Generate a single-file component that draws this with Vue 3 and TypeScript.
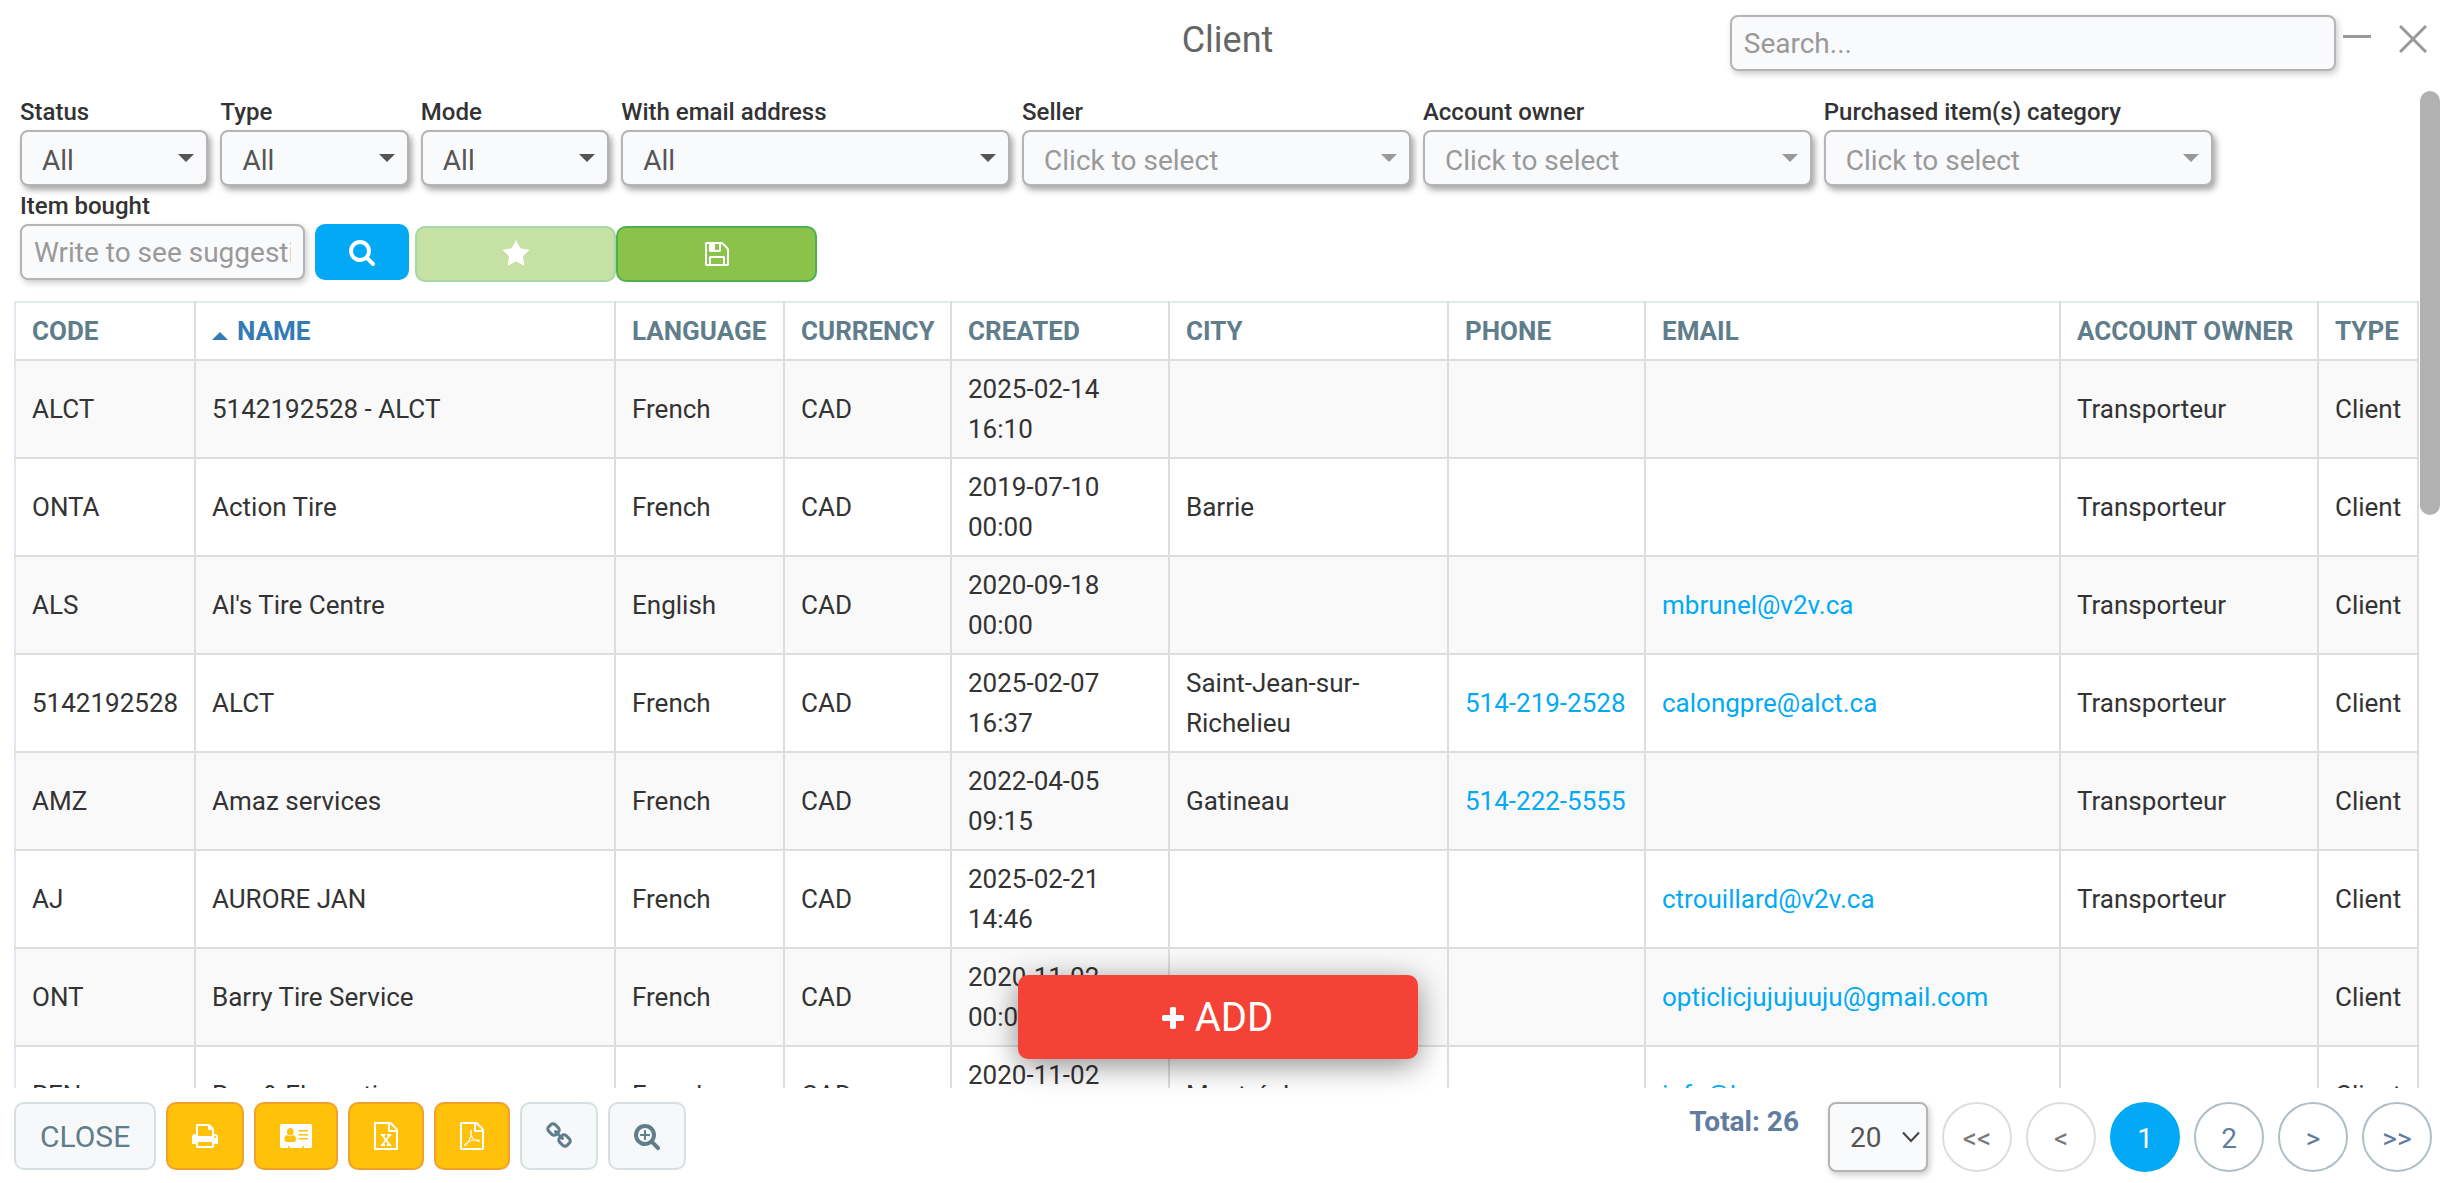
<script setup lang="ts">
import { ref } from 'vue'

interface Filter {
  id: string
  label: string
  value: string
  span: 1 | 2
  muted?: boolean
}

interface Client {
  code: string
  name: string
  language: string
  currency: string
  created: string
  city?: string
  phone?: string
  email?: string
  owner?: string
  type: string
}

interface Action {
  label: string
  icon: string
  viewBox: string
  width: number
  tone: 'amber' | 'light'
}

const filters: Filter[] = [
  { id: 'status', label: 'Status', value: 'All', span: 1 },
  { id: 'type', label: 'Type', value: 'All', span: 1 },
  { id: 'mode', label: 'Mode', value: 'All', span: 1 },
  { id: 'with-email', label: 'With email address', value: 'All', span: 2 },
  { id: 'seller', label: 'Seller', value: 'Click to select', span: 2, muted: true },
  { id: 'owner', label: 'Account owner', value: 'Click to select', span: 2, muted: true },
  { id: 'category', label: 'Purchased item(s) category', value: 'Click to select', span: 2, muted: true },
]

const columns = ['Code', 'Name', 'Language', 'Currency', 'Created', 'City', 'Phone', 'Email', 'Account owner', 'Type']
const sortedBy = 'Name'

const clients: Client[] = [
  { code: 'ALCT', name: '5142192528 - ALCT', language: 'French', currency: 'CAD', created: '2025-02-14 16:10', owner: 'Transporteur', type: 'Client' },
  { code: 'ONTA', name: 'Action Tire', language: 'French', currency: 'CAD', created: '2019-07-10 00:00', city: 'Barrie', owner: 'Transporteur', type: 'Client' },
  { code: 'ALS', name: "Al's Tire Centre", language: 'English', currency: 'CAD', created: '2020-09-18 00:00', email: 'mbrunel@v2v.ca', owner: 'Transporteur', type: 'Client' },
  { code: '5142192528', name: 'ALCT', language: 'French', currency: 'CAD', created: '2025-02-07 16:37', city: 'Saint-Jean-sur-Richelieu', phone: '514-219-2528', email: 'calongpre@alct.ca', owner: 'Transporteur', type: 'Client' },
  { code: 'AMZ', name: 'Amaz services', language: 'French', currency: 'CAD', created: '2022-04-05 09:15', city: 'Gatineau', phone: '514-222-5555', owner: 'Transporteur', type: 'Client' },
  { code: 'AJ', name: 'AURORE JAN', language: 'French', currency: 'CAD', created: '2025-02-21 14:46', email: 'ctrouillard@v2v.ca', owner: 'Transporteur', type: 'Client' },
  { code: 'ONT', name: 'Barry Tire Service', language: 'French', currency: 'CAD', created: '2020-11-02 00:00', email: 'opticlicjujujuuju@gmail.com', type: 'Client' },
  { code: 'REN', name: 'Ren & Eleganti', language: 'French', currency: 'CAD', created: '2020-11-02 00:00', city: 'Montréal', email: 'info@b', type: 'Client' },
]

const sheet = 'M1596 380q28 28 48 76t20 88v1152q0 40-28 68t-68 28h-1344q-40 0-68-28t-28-68v-1600q0-40 28-68t68-28h896q40 0 88 20t76 48zm-444-244v376h376q-10-29-22-41l-313-313q-12-12-41-22zm384 1528v-1024h-416q-40 0-68-28t-28-68v-416h-768v1536h1280z'
const lens = 'M1216 832q0-185-131.5-316.5t-316.5-131.5-316.5 131.5-131.5 316.5 131.5 316.5 316.5 131.5 316.5-131.5 131.5-316.5zm512 832q0 52-38 90t-90 38q-54 0-90-38l-343-342q-179 124-399 124-143 0-273.5-55.5t-225-150-150-225-55.5-273.5 55.5-273.5 150-225 225-150 273.5-55.5 273.5 55.5 225 150 150 225 55.5 273.5q0 220-124 399l343 343q37 37 37 90z'

const icons = {
  search: lens,
  star: 'M1728 647q0 22-26 48l-363 354 86 500q1 7 1 20 0 21-10.5 35.5t-30.5 14.5q-19 0-40-12l-449-236-449 236q-22 12-40 12-21 0-31.5-14.5t-10.5-35.5q0-6 2-20l86-500-364-354q-25-27-25-48 0-37 56-46l502-73 225-455q19-41 49-41t49 41l225 455 502 73q56 9 56 46z',
  save: 'M512 1536h768v-384h-768v384zm896 0h128v-896q0-14-10-38.5t-20-34.5l-281-281q-10-10-34-20t-39-10v416q0 40-28 68t-68 28h-576q-40 0-68-28t-28-68v-416h-128v1280h128v-416q0-40 28-68t68-28h832q40 0 68 28t28 68v416zm-384-928v-320q0-13-9.5-22.5t-22.5-9.5h-192q-13 0-22.5 9.5t-9.5 22.5v320q0 13 9.5 22.5t22.5 9.5h192q13 0 22.5-9.5t9.5-22.5zm640 32v928q0 40-28 68t-68 28h-1344q-40 0-68-28t-28-68v-1344q0-40 28-68t68-28h928q40 0 88 20t76 48l280 280q28 28 48 76t20 88z',
  plus: 'M1600 736v192q0 40-28 68t-68 28h-416v416q0 40-28 68t-68 28h-192q-40 0-68-28t-28-68v-416h-416q-40 0-68-28t-28-68v-192q0-40 28-68t68-28h416v-416q0-40 28-68t68-28h192q40 0 68 28t28 68v416h416q40 0 68 28t28 68z',
}

const actions: Action[] = [
  {
    label: 'Print', tone: 'amber', viewBox: '64 0 1664 1792', width: 26,
    icon: 'M448 1536h896v-256h-896v256zm0-640h896v-384h-160q-40 0-68-28t-28-68v-160h-640v640zm1152 64q0-26-19-45t-45-19-45 19-19 45 19 45 45 19 45-19 19-45zm128 0v416q0 13-9.5 22.5t-22.5 9.5h-224v160q0 40-28 68t-68 28h-960q-40 0-68-28t-28-68v-160h-224q-13 0-22.5-9.5t-9.5-22.5v-416q0-79 56.5-135.5t135.5-56.5h64v-544q0-40 28-68t68-28h672q40 0 88 20t76 48l152 152q28 28 48 76t20 88v256h64q79 0 135.5 56.5t56.5 135.5z',
  },
  {
    label: 'Contact cards', tone: 'amber', viewBox: '0 0 32 28', width: 32,
    icon: 'M2 2h28q2 0 2 2v20q0 2-2 2h-6v-2h-1.500v2h-13v-2h-1.500v2h-6q-2 0-2-2v-20q0-2 2-2zM7 13C5 13.500 4.500 15.500 4.500 17.500Q4.500 20 7 20h6.500Q16 20 16 17.500C16 15.500 15.500 13.500 13.500 13Q10.250 15.500 7 13zM10.250 6a3.400 3.800 0 1 0 .01 0zM18.500 8v1.500h9.500v-1.500zM18.500 12v1.500h9.500v-1.500zM18.500 16v1.500h9.500v-1.500z',
  },
  {
    label: 'Export to Excel', tone: 'amber', viewBox: '128 0 1536 1792', width: 24,
    icon: sheet + 'm-979-234v106h281v-106h-75l103-161q5-7 10-16.5t7.5-13.5 3.5-4h2q1 4 5 10 2 4 4.5 7.5t6 8 6.5 8.5l107 161h-76v106h291v-106h-68l-192-273 195-282h67v-107h-279v107h74l-103 159q-4 7-10 16.500t-9 13.500l-2 3h-2q-1-4-5-10-6-11-17-23l-106-159h76v-107h-290v107h68l189 272-194 283h-68z',
  },
  {
    label: 'Export to PDF', tone: 'amber', viewBox: '128 0 1536 1792', width: 24,
    icon: sheet + 'm-514-593q33 26 84 56 59-7 117-7 147 0 177 49 16 22 2 52 0 1-1 2l-2 2v1q-6 38-71 38-48 0-115-20t-130-53q-221 24-392 83-153 262-242 262-15 0-28-7l-24-12q-1-1-6-5-10-10-6-36 9-40 56-91.5t132-96.5q14-9 23 6 2 2 2 4 52-85 107-197 68-136 104-262-24-82-30.5-159.5t6.5-127.5q11-40 42-40h22q23 0 35 15 18 21 9 68-2 6-4 8 1 3 1 8v30q-2 123-14 192 55 164 146 238zm-576 411q52-24 137-158-51 40-87.5 84t-49.5 74zm398-920q-15 42-2 132 1-7 7-44 0-3 7-43 1-4 4-8-1-1-1-2-1-2-1-3-1-22-13-36 0 1-1 2v2zm-124 661q135-54 284-81-2-1-13-9.5t-16-13.5q-76-67-127-176-27 86-83 197-30 56-45 83zm646-16q-24-24-140-24 76 28 124 28 14 0 18-1 0-1-2-3z',
  },
  {
    label: 'Copy link', tone: 'light', viewBox: '64 0 1664 1792', width: 26,
    icon: 'M1520 1216q0-40-28-68l-208-208q-28-28-68-28-42 0-72 32 3 3 19 18.5t21.5 21.5 15 19 13 25.5 3.5 27.5q0 40-28 68t-68 28q-15 0-27.5-3.5t-25.5-13-19-15-21.5-21.5-18.5-19q-33 31-33 73 0 40 28 68l206 207q27 27 68 27 40 0 68-26l147-146q28-28 28-67zm-703-705q0-40-28-68l-206-207q-28-28-68-28-39 0-68 27l-147 146q-28 28-28 67 0 40 28 68l208 208q27 27 68 27 42 0 72-31-3-3-19-18.5t-21.5-21.5-15-19-13-25.5-3.5-27.5q0-40 28-68t68-28q15 0 27.5 3.5t25.5 13 19 15 21.5 21.5 18.5 19q33-31 33-73zm895 705q0 120-85 203l-147 146q-83 83-203 83-121 0-204-85l-206-207q-83-83-83-203 0-123 88-209l-88-88q-86 88-208 88-120 0-204-84l-208-208q-84-84-84-204t85-203l147-146q83-83 203-83 121 0 204 85l206 207q83 83 83 203 0 123-88 209l88 88q86-88 208-88 120 0 204 84l208 208q84 84 84 204z',
  },
  {
    label: 'Advanced search', tone: 'light', viewBox: '64 0 1664 1792', width: 26,
    icon: 'M1088 800v64q0 13-9.5 22.5t-22.5 9.5h-224v224q0 13-9.5 22.5t-22.5 9.5h-64q-13 0-22.5-9.5t-9.5-22.5v-224h-224q-13 0-22.5-9.5t-9.5-22.5v-64q0-13 9.5-22.5t22.5-9.5h224v-224q0-13 9.5-22.5t22.5-9.5h64q13 0 22.5 9.5t9.5 22.5v224h224q13 0 22.5 9.5t9.5 22.5z' + lens,
  },
]

const pages = [
  { text: '<<', label: 'First page', state: 'off' },
  { text: '<', label: 'Previous page', state: 'off' },
  { text: '1', label: 'Page 1', state: 'current' },
  { text: '2', label: 'Page 2', state: '' },
  { text: '>', label: 'Next page', state: '' },
  { text: '>>', label: 'Last page', state: '' },
]

const search = ref('')
const itemBought = ref('')
</script>

<template>
  <main class="window">
    <header class="titlebar">
      <h1 class="title">Client</h1>
      <div class="tools">
        <input v-model="search" class="field search" type="text" placeholder="Search..." aria-label="Search" />
        <button class="win-btn minimize" type="button" aria-label="Minimize">
          <svg width="28" height="28" viewBox="0 0 28 28"><path d="M0 11.500h28" stroke="#999" stroke-width="3" /></svg>
        </button>
        <button class="win-btn" type="button" aria-label="Close window">
          <svg width="28" height="28" viewBox="0 0 28 28"><path d="M1 1L27 27M27 1L1 27" stroke="#999" stroke-width="3" /></svg>
        </button>
      </div>
    </header>

    <section class="body">
      <form class="filters" @submit.prevent>
        <div v-for="f in filters" :key="f.id" class="filter" :class="{ wide: f.span === 2 }">
          <label class="label" :for="f.id">{{ f.label }}</label>
          <div class="picker" :class="{ muted: f.muted }">
            <select :id="f.id" class="field">
              <option>{{ f.value }}</option>
            </select>
          </div>
        </div>
      </form>

      <div class="filters-second">
        <div class="item">
          <label class="label" for="item-bought">Item bought</label>
          <input id="item-bought" v-model="itemBought" class="field" type="text" placeholder="Write to see suggestions" />
        </div>
        <button class="btn find" type="button" aria-label="Search clients">
          <svg class="icon" width="26" height="28" viewBox="64 0 1664 1792"><path :d="icons.search" /></svg>
        </button>
        <div class="pair">
          <button class="btn favorite" type="button" aria-label="Favorite">
            <svg class="icon" width="26" height="28" viewBox="64 0 1664 1792"><path :d="icons.star" /></svg>
          </button>
          <button class="btn save" type="button" aria-label="Save">
            <svg class="icon" width="24" height="28" viewBox="128 0 1536 1792"><path :d="icons.save" /></svg>
          </button>
        </div>
      </div>

      <table class="clients">
        <colgroup>
          <col v-for="c in columns" :key="c" :class="'col-' + c.toLowerCase().replace(' ', '-')" />
        </colgroup>
        <thead>
          <tr>
            <th v-for="c in columns" :key="c" scope="col" :class="{ sorted: c === sortedBy }">{{ c }}</th>
          </tr>
        </thead>
        <tbody>
          <tr v-for="c in clients" :key="c.code">
            <td>{{ c.code }}</td>
            <td>{{ c.name }}</td>
            <td>{{ c.language }}</td>
            <td>{{ c.currency }}</td>
            <td>{{ c.created }}</td>
            <td>{{ c.city }}</td>
            <td><a v-if="c.phone" :href="'tel:' + c.phone">{{ c.phone }}</a></td>
            <td><a v-if="c.email" :href="'mailto:' + c.email">{{ c.email }}</a></td>
            <td>{{ c.owner }}</td>
            <td>{{ c.type }}</td>
          </tr>
        </tbody>
      </table>
      <div class="scroll-thumb" aria-hidden="true"></div>
    </section>

    <button class="add" type="button">
      <svg class="icon" width="22" height="28" viewBox="192 0 1408 1536"><path :d="icons.plus" /></svg>
      ADD
    </button>

    <footer class="footer">
      <button class="action light close" type="button">CLOSE</button>
      <button v-for="a in actions" :key="a.label" class="action" :class="a.tone" type="button" :aria-label="a.label">
        <svg class="icon" :width="a.width" height="28" :viewBox="a.viewBox"><path fill-rule="evenodd" :d="a.icon" /></svg>
      </button>

      <div class="total">Total: 26</div>
      <div class="page-size">
        <select class="field" aria-label="Rows per page">
          <option>20</option>
        </select>
        <svg class="chevron" width="18" height="12" viewBox="0 0 18 12"><path d="M1 1.500L9 10L17 1.500" fill="none" stroke="#444" stroke-width="2" /></svg>
      </div>
      <nav class="pages" aria-label="Pagination">
        <button v-for="p in pages" :key="p.text" class="page" :class="p.state" type="button" :aria-label="p.label">{{ p.text }}</button>
      </nav>
    </footer>
  </main>
</template>

<style>
body {
  margin: 0;
  background: #fff;
}
</style>

<style scoped>
.window,
.window * {
  box-sizing: border-box;
}

.window {
  position: relative;
  display: flex;
  flex-direction: column;
  height: 100vh;
  overflow: hidden;
  background: #fff;
  color: #333;
  font-family: Roboto, "Liberation Sans", sans-serif;
  font-size: 26px;
  line-height: 40px;
}

button,
input,
select {
  margin: 0;
  font-family: inherit;
}

button {
  display: flex;
  align-items: center;
  justify-content: center;
  padding: 0;
  cursor: pointer;
}

.icon {
  display: block;
  fill: currentColor;
}

.field {
  display: block;
  width: 100%;
  height: 56px;
  padding: 0 12px;
  border: 2px solid #b5b3b3;
  border-radius: 8px;
  background: #f9fafc;
  box-shadow: 2px 3px 6px rgba(0, 0, 0, 0.2);
  color: #555;
  font-size: 28px;
  appearance: none;
}

.field::placeholder {
  color: #999;
  opacity: 1;
}

/* Title bar */
.titlebar {
  display: grid;
  grid-template-columns: 1fr auto 1fr;
  align-items: start;
  flex: none;
  height: 91px;
  padding: 15px 22px 0 28px;
}

.title {
  grid-column: 2;
  margin: 0;
  color: #666;
  font-size: 36px;
  font-weight: 400;
  line-height: 50px;
}

.tools {
  display: flex;
  justify-content: flex-end;
}

.search {
  width: calc(25vw - 6px);
}

.win-btn {
  width: 28px;
  height: 28px;
  margin-top: 10px;
  border: 0;
  background: none;
}

.minimize {
  margin-left: 7px;
  margin-right: 28px;
}

/* Filters */
.body {
  position: relative;
  flex: 1;
  min-height: 0;
  overflow: hidden;
  padding: 6px 30px 0 14px;
}

.filters {
  display: grid;
  grid-template-columns: repeat(12, 1fr);
  gap: 12px;
  padding: 0 6px;
}

.wide {
  grid-column: span 2;
}

.label {
  display: block;
  margin-bottom: 3px;
  font-size: 24px;
  font-weight: 500;
  line-height: 30px;
  white-space: nowrap;
}

.picker {
  display: grid;
  align-items: center;
  color: #555;
}

.picker .field {
  grid-area: 1 / 1;
  padding: 4px 36px 0 20px;
  box-shadow: 3px 4px 6px rgba(0, 0, 0, 0.35);
}

.picker::after {
  grid-area: 1 / 1;
  justify-self: end;
  margin-right: 14px;
  border: 8px solid transparent;
  border-top-color: currentColor;
  border-bottom: 0;
  content: "";
  pointer-events: none;
}

.muted,
.muted .field {
  color: #999;
}

.filters-second {
  display: flex;
  align-items: flex-end;
  margin-top: 5px;
  padding: 0 6px;
}

.item {
  width: 285px;
  margin-bottom: 2px;
}

.btn {
  height: 56px;
  border: 2px solid;
  border-radius: 10px;
}

.find {
  width: 94px;
  margin: 0 6px 2px 10px;
  border-color: #03a9f4;
  background: #03a9f4;
  color: #fff;
}

.pair {
  display: flex;
}

.favorite,
.save {
  width: 201px;
}

.favorite {
  border-color: #a5d7a7;
  background: #c5e1a4;
  color: #fff;
}

.save {
  border-color: #4caf50;
  background: #8bc34a;
  color: #fff;
}

.save .icon,
.favorite .icon,
.find .icon {
  fill: #fff;
}

/* Client table */
.clients {
  width: 100%;
  margin-top: 19px;
  border-collapse: collapse;
  table-layout: fixed;
}

.col-code { width: 180px; }
.col-name { width: 420px; }
.col-language { width: 169px; }
.col-currency { width: 167px; }
.col-created { width: 218px; }
.col-city { width: 279px; }
.col-phone { width: 197px; }
.col-email { width: 415px; }
.col-account-owner { width: 258px; }
.col-type { width: 100px; }

th,
td {
  padding: 8px 16px;
  border: 2px solid #ddd;
  text-align: left;
  vertical-align: middle;
}

th {
  border-top-color: #deebec;
  color: #607d8b;
  font-weight: 700;
  text-transform: uppercase;
  white-space: nowrap;
}

th:first-child,
td:first-child {
  border-left-color: #e1e8f0;
}

tbody tr:nth-child(odd) {
  background: #f9f9f9;
}

td:nth-child(5) {
  padding-right: 60px;
}

.sorted {
  color: #337ab7;
}

.sorted::before {
  display: inline-block;
  margin-right: 9px;
  border: 8px solid transparent;
  border-top: 0;
  border-bottom-color: currentColor;
  content: "";
}

a {
  color: #03a9f4;
  text-decoration: none;
}

.scroll-thumb {
  position: absolute;
  top: 0;
  right: 9px;
  width: 20px;
  height: 424px;
  border-radius: 10px;
  background: #b1b1b1;
}

.add {
  position: absolute;
  bottom: 124px;
  left: 50%;
  gap: 11px;
  width: 400px;
  height: 84px;
  margin-left: -207px;
  border: 0;
  border-radius: 10px;
  background: #f44336;
  box-shadow: 0 6px 30px rgba(0, 0, 0, 0.45);
  color: #fff;
  font-size: 40px;
}

/* Footer */
.footer {
  display: flex;
  align-items: flex-start;
  flex: none;
  gap: 10px;
  height: 95px;
  padding: 14px 17px 0 14px;
}

.action {
  height: 68px;
  padding: 0 24px;
  border: 2px solid;
  border-radius: 10px;
}

.amber {
  border-color: #f0a030;
  background: #ffc10a;
  color: #fff;
}

.light {
  border-color: #d6dfe1;
  background: #f6f8fa;
  color: #607d8b;
}

.close {
  font-size: 30px;
}

.total {
  margin-left: auto;
  color: #607d9f;
  font-size: 28px;
  font-weight: 700;
}

.page-size {
  display: grid;
  align-items: center;
  width: 100px;
  margin-left: 19px;
}

.page-size .field {
  grid-area: 1 / 1;
  height: 70px;
  padding: 0 20px;
}

.chevron {
  grid-area: 1 / 1;
  justify-self: end;
  margin-right: 8px;
  pointer-events: none;
}

.pages {
  display: flex;
  gap: 14px;
  margin-left: 4px;
}

.page {
  width: 70px;
  height: 70px;
  padding-top: 3px;
  border: 2px solid #b0bec5;
  border-radius: 50%;
  background: #fff;
  color: #607d9f;
  font-size: 28px;
}

.off {
  border-color: #ddd;
  color: #777;
}

.current {
  border-color: #03a9f4;
  background: #03a9f4;
  color: #fff;
}
</style>
